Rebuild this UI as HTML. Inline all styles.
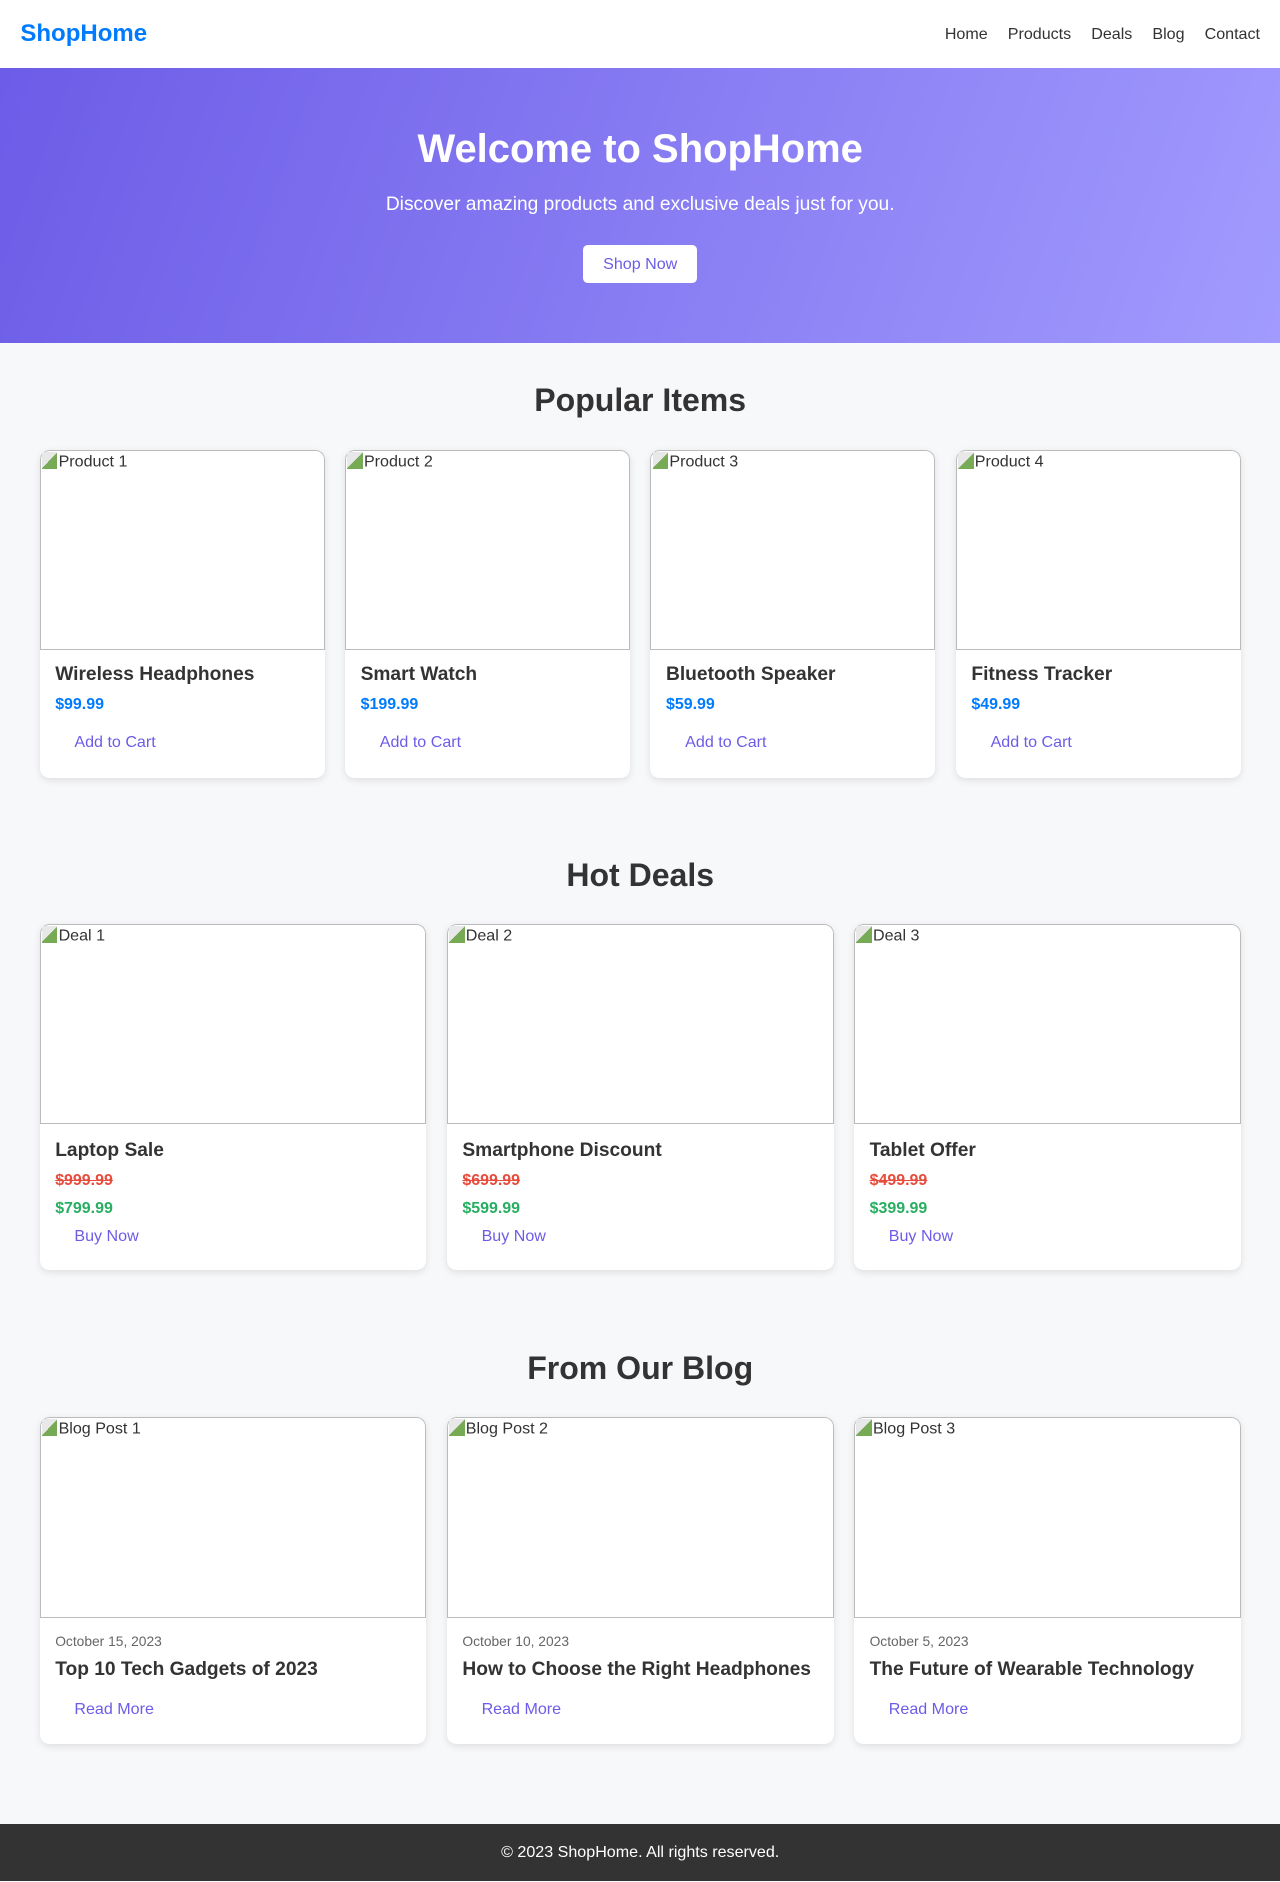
<!DOCTYPE html>
<html><head><meta charset="utf-8"><style>
html{zoom:1.2;background:#f7f8fa}
*{box-sizing:border-box;margin:0;padding:0}
body{width:1067px;font-family:"Liberation Sans",Arial,sans-serif;background:#f7f8fa;color:#333}
header{height:57px;background:#fff;display:flex;align-items:center;justify-content:space-between;padding:0 17px}
.logo{color:#007bff;font-size:20px;font-weight:bold}
nav a{color:#333;text-decoration:none;font-size:13.4px;margin-left:16.7px}
.hero{height:229px;background:linear-gradient(110deg,#6c5ce7,#a29bfe);color:#fff;text-align:center;padding-top:45px}
.hero h1{font-size:33.3px;line-height:46px}
.hero p{font-size:16px;line-height:20px;margin-top:13px}
.hero .btn{display:inline-block;margin-top:23px;background:#fff;color:#6c5ce7;border-radius:4px;width:95px;height:32px;line-height:32px;font-size:13.4px}
h2{text-align:center;font-size:26.7px;line-height:38px;margin-bottom:22px}
.sec{padding:0 33px}
.grid{display:grid;gap:17px}
.g4{grid-template-columns:repeat(4,1fr)}
.g3{grid-template-columns:repeat(3,1fr)}
.card{background:#fff;border-radius:8px;box-shadow:0 2px 6px rgba(0,0,0,.1);overflow:hidden}
.img{height:167px;border:1px solid #bbb;border-radius:8px 8px 0 0;font-size:13.4px;line-height:16px;padding:1px 0 0 1px}
.img i{display:inline-block;width:13px;height:14px;background:linear-gradient(135deg,#e8e8e8 50%,#7a5 50%);vertical-align:-2px;margin-right:1px}
.body{padding:0 12px 0 13px}
.t{font-size:16px;font-weight:bold;line-height:22px}
.p{font-size:13.3px;font-weight:bold;color:#007bff;line-height:18px}
.b{color:#6c5ce7;font-size:13.4px;padding-left:16px;line-height:18px}
.old{color:#e74c3c;text-decoration:line-through;font-size:13.3px;font-weight:bold;line-height:18px}
.new{color:#27ae60;font-size:13.3px;font-weight:bold;line-height:18px}
.d{font-size:11.5px;color:#666;line-height:16px}
footer{background:#333;color:#fff;text-align:center;height:48px;line-height:48px;font-size:13.4px}
</style></head><body>
<header><div class="logo">ShopHome</div><nav><a>Home</a><a>Products</a><a>Deals</a><a>Blog</a><a>Contact</a></nav></header>
<div class="hero"><h1>Welcome to ShopHome</h1><p>Discover amazing products and exclusive deals just for you.</p><div class="btn">Shop Now</div></div>

<div class="sec" style="padding-top:29px"><h2>Popular Items</h2>
<div class="grid g4">
<div class="card" style="height:273px"><div class="img"><i></i>Product 1</div><div class="body"><div class="t" style="margin-top:10px">Wireless Headphones</div><div class="p" style="margin-top:4px">$99.99</div><div class="b" style="margin-top:14px">Add to Cart</div></div></div>
<div class="card" style="height:273px"><div class="img"><i></i>Product 2</div><div class="body"><div class="t" style="margin-top:10px">Smart Watch</div><div class="p" style="margin-top:4px">$199.99</div><div class="b" style="margin-top:14px">Add to Cart</div></div></div>
<div class="card" style="height:273px"><div class="img"><i></i>Product 3</div><div class="body"><div class="t" style="margin-top:10px">Bluetooth Speaker</div><div class="p" style="margin-top:4px">$59.99</div><div class="b" style="margin-top:14px">Add to Cart</div></div></div>
<div class="card" style="height:273px"><div class="img"><i></i>Product 4</div><div class="body"><div class="t" style="margin-top:10px">Fitness Tracker</div><div class="p" style="margin-top:4px">$49.99</div><div class="b" style="margin-top:14px">Add to Cart</div></div></div>
</div></div>

<div class="sec" style="padding-top:63px"><h2 style="margin-bottom:21px">Hot Deals</h2>
<div class="grid g3">
<div class="card" style="height:288px"><div class="img"><i></i>Deal 1</div><div class="body"><div class="t" style="margin-top:11px">Laptop Sale</div><div class="old" style="margin-top:5px">$999.99</div><div class="new" style="margin-top:5px">$799.99</div><div class="b" style="margin-top:6px">Buy Now</div></div></div>
<div class="card" style="height:288px"><div class="img"><i></i>Deal 2</div><div class="body"><div class="t" style="margin-top:11px">Smartphone Discount</div><div class="old" style="margin-top:5px">$699.99</div><div class="new" style="margin-top:5px">$599.99</div><div class="b" style="margin-top:6px">Buy Now</div></div></div>
<div class="card" style="height:288px"><div class="img"><i></i>Deal 3</div><div class="body"><div class="t" style="margin-top:11px">Tablet Offer</div><div class="old" style="margin-top:5px">$499.99</div><div class="new" style="margin-top:5px">$399.99</div><div class="b" style="margin-top:6px">Buy Now</div></div></div>
</div></div>

<div class="sec" style="padding-top:64px;padding-bottom:67px"><h2 style="margin-bottom:21px">From Our Blog</h2>
<div class="grid g3">
<div class="card" style="height:272px"><div class="img"><i></i>Blog Post 1</div><div class="body"><div class="d" style="margin-top:12px">October 15, 2023</div><div class="t" style="margin-top:5px">Top 10 Tech Gadgets of 2023</div><div class="b" style="margin-top:13px">Read More</div></div></div>
<div class="card" style="height:272px"><div class="img"><i></i>Blog Post 2</div><div class="body"><div class="d" style="margin-top:12px">October 10, 2023</div><div class="t" style="margin-top:5px">How to Choose the Right Headphones</div><div class="b" style="margin-top:13px">Read More</div></div></div>
<div class="card" style="height:272px"><div class="img"><i></i>Blog Post 3</div><div class="body"><div class="d" style="margin-top:12px">October 5, 2023</div><div class="t" style="margin-top:5px">The Future of Wearable Technology</div><div class="b" style="margin-top:13px">Read More</div></div></div>
</div></div>

<footer>© 2023 ShopHome. All rights reserved.</footer>
</body></html>
